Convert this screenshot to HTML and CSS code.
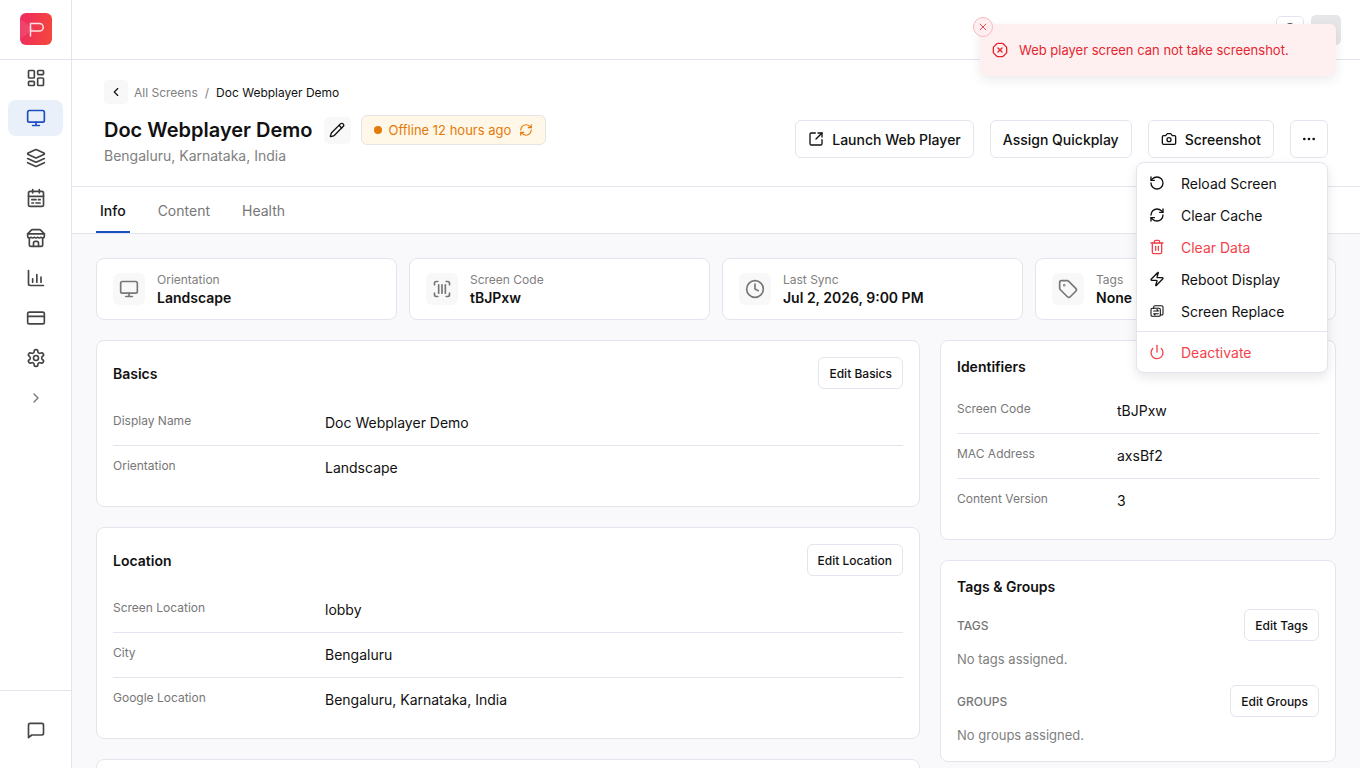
FILE: index.html
```html
<!DOCTYPE html>
<html lang="en">
<head>
  <meta charset="UTF-8">
  <meta name="viewport" content="width=device-width, initial-scale=1.0">
  <title>Doc Webplayer Demo</title>
  <link rel="stylesheet" href="styles.css">
</head>
<body>
  <svg class="sprite" width="0" height="0">
    <symbol id="i-monitor" viewBox="0 0 24 24"><rect x="2" y="3" width="20" height="14" rx="2"/><path d="M8 21h8M12 17v4"/></symbol>
    <symbol id="i-refresh" viewBox="0 0 24 24"><path d="M3 12a9 9 0 0 1 9-9 9.75 9.75 0 0 1 6.74 2.74L21 8"/><path d="M21 3v5h-5"/><path d="M21 12a9 9 0 0 1-9 9 9.75 9.75 0 0 1-6.74-2.74L3 16"/><path d="M8 16H3v5"/></symbol>
  </svg>

  <aside class="sidebar">
    <div class="logo-row">
      <div class="logo">
        <svg viewBox="0 0 32 32" width="32" height="32"><path class="logo-tri" d="M0 6l14 10L0 26z"/><path class="logo-p" d="M10.5 23V10.5h9a3.5 3.5 0 0 1 0 7.5h-9"/></svg>
      </div>
    </div>
    <nav class="side-nav">
      <a class="side-item"><svg class="ico" viewBox="0 0 24 24"><rect x="3" y="3" width="7" height="9" rx="1"/><rect x="14" y="3" width="7" height="5" rx="1"/><rect x="14" y="12" width="7" height="9" rx="1"/><rect x="3" y="16" width="7" height="5" rx="1"/></svg></a>
      <a class="side-item active"><svg class="ico"><use href="#i-monitor"/></svg></a>
      <a class="side-item"><svg class="ico" viewBox="0 0 24 24"><path d="m12.83 2.18a2 2 0 0 0-1.66 0L2.6 6.08a1 1 0 0 0 0 1.83l8.58 3.91a2 2 0 0 0 1.66 0l8.58-3.9a1 1 0 0 0 0-1.83Z"/><path d="m22 17.65-9.17 4.16a2 2 0 0 1-1.66 0L2 17.65"/><path d="m22 12.65-9.17 4.16a2 2 0 0 1-1.66 0L2 12.65"/></svg></a>
      <a class="side-item"><svg class="ico" viewBox="0 0 24 24"><path d="M8 2v4M16 2v4"/><rect x="3" y="4" width="18" height="18" rx="2"/><path d="M3 10h18M7 14h5M15 14h2M7 18h2M12 18h5"/></svg></a>
      <a class="side-item"><svg class="ico" viewBox="0 0 24 24"><path d="m2 7 4.41-4.41A2 2 0 0 1 7.83 2h8.34a2 2 0 0 1 1.42.59L22 7"/><path d="M4 12v8a2 2 0 0 0 2 2h12a2 2 0 0 0 2-2v-8"/><path d="M15 22v-4a2 2 0 0 0-2-2h-2a2 2 0 0 0-2 2v4"/><path d="M2 7h20"/><path d="M22 7v3a2 2 0 0 1-2 2 2.7 2.7 0 0 1-1.59-.63.7.7 0 0 0-.82 0A2.7 2.7 0 0 1 16 12a2.7 2.7 0 0 1-1.59-.63.7.7 0 0 0-.82 0A2.7 2.7 0 0 1 12 12a2.7 2.7 0 0 1-1.59-.63.7.7 0 0 0-.82 0A2.7 2.7 0 0 1 8 12a2.7 2.7 0 0 1-1.59-.63.7.7 0 0 0-.82 0A2.7 2.7 0 0 1 4 12a2 2 0 0 1-2-2V7"/></svg></a>
      <a class="side-item"><svg class="ico" viewBox="0 0 24 24"><path d="M3 3v16a2 2 0 0 0 2 2h16"/><path d="M8 17v-4M13 17V8M18 17v-6"/></svg></a>
      <a class="side-item"><svg class="ico" viewBox="0 0 24 24"><rect x="2" y="5" width="20" height="14" rx="2"/><path d="M2 10h20"/></svg></a>
      <a class="side-item"><svg class="ico" viewBox="0 0 24 24"><path d="M12.22 2h-.44a2 2 0 0 0-2 2v.18a2 2 0 0 1-1 1.73l-.43.25a2 2 0 0 1-2 0l-.15-.08a2 2 0 0 0-2.73.73l-.22.38a2 2 0 0 0 .73 2.73l.15.1a2 2 0 0 1 1 1.72v.51a2 2 0 0 1-1 1.74l-.15.09a2 2 0 0 0-.73 2.73l.22.38a2 2 0 0 0 2.73.73l.15-.08a2 2 0 0 1 2 0l.43.25a2 2 0 0 1 1 1.73V20a2 2 0 0 0 2 2h.44a2 2 0 0 0 2-2v-.18a2 2 0 0 1 1-1.73l.43-.25a2 2 0 0 1 2 0l.15.08a2 2 0 0 0 2.73-.73l.22-.39a2 2 0 0 0-.73-2.73l-.15-.08a2 2 0 0 1-1-1.74v-.5a2 2 0 0 1 1-1.74l.15-.09a2 2 0 0 0 .73-2.73l-.22-.38a2 2 0 0 0-2.73-.73l-.15.08a2 2 0 0 1-2 0l-.43-.25a2 2 0 0 1-1-1.73V4a2 2 0 0 0-2-2z"/><circle cx="12" cy="12" r="3"/></svg></a>
      <a class="side-item side-toggle"><svg class="ico-sm" viewBox="0 0 24 24"><path d="m9 18 6-6-6-6"/></svg></a>
    </nav>
    <div class="side-foot">
      <svg class="ico" viewBox="0 0 24 24"><path d="M21 16a2 2 0 0 1-2 2H7l-4 3V6a2 2 0 0 1 2-2h14a2 2 0 0 1 2 2z"/></svg>
    </div>
  </aside>

  <div class="main">
    <div class="topbar">
      <div class="top-btn"><span class="bell-top"></span></div>
      <div class="avatar"></div>
    </div>

    <header class="page-head">
      <div class="head-left">
        <div class="crumbs">
          <span class="back-btn"><svg class="ico-xs" viewBox="0 0 24 24"><path d="m15 18-6-6 6-6"/></svg></span>
          <span class="crumb-link">All Screens</span>
          <span class="crumb-sep">/</span>
          <span class="crumb-current">Doc Webplayer Demo</span>
        </div>
        <div class="title-row">
          <h1>Doc Webplayer Demo</h1>
          <span class="pencil-btn"><svg class="ico-sm" viewBox="0 0 24 24"><path d="M21.174 6.812a1 1 0 0 0-3.986-3.987L3.842 16.174a2 2 0 0 0-.5.83l-1.321 4.352a.5.5 0 0 0 .623.622l4.353-1.32a2 2 0 0 0 .83-.497z"/><path d="m15 5 4 4"/></svg></span>
          <span class="status-badge"><span class="status-dot"></span>Offline 12 hours ago<svg class="ico-xs status-refresh"><use href="#i-refresh"/></svg></span>
        </div>
        <p class="subtitle">Bengaluru, Karnataka, India</p>
      </div>
      <div class="head-actions">
        <button class="btn"><svg class="ico-sm" viewBox="0 0 24 24"><path d="M21 13v6a2 2 0 0 1-2 2H5a2 2 0 0 1-2-2V5a2 2 0 0 1 2-2h6"/><path d="m21 3-9 9"/><path d="M15 3h6v6"/></svg>Launch Web Player</button>
        <button class="btn">Assign Quickplay</button>
        <button class="btn"><svg class="ico-sm" viewBox="0 0 24 24"><path d="M14.5 4h-5L7 7H4a2 2 0 0 0-2 2v9a2 2 0 0 0 2 2h16a2 2 0 0 0 2-2V9a2 2 0 0 0-2-2h-3l-2.5-3z"/><circle cx="12" cy="13" r="3"/></svg>Screenshot</button>
        <button class="btn btn-more"><svg class="ico-sm" viewBox="0 0 24 24"><circle cx="5" cy="12" r="1"/><circle cx="12" cy="12" r="1"/><circle cx="19" cy="12" r="1"/></svg></button>
      </div>
    </header>

    <div class="tabs">
      <a class="tab active">Info</a>
      <a class="tab">Content</a>
      <a class="tab">Health</a>
    </div>

    <div class="content">
      <div class="stats">
        <div class="stat">
          <span class="stat-icon"><svg class="ico"><use href="#i-monitor"/></svg></span>
          <div><div class="stat-label">Orientation</div><div class="stat-value">Landscape</div></div>
        </div>
        <div class="stat">
          <span class="stat-icon"><svg class="ico" viewBox="0 0 24 24"><path d="M3 7V5a2 2 0 0 1 2-2h2"/><path d="M17 3h2a2 2 0 0 1 2 2v2"/><path d="M21 17v2a2 2 0 0 1-2 2h-2"/><path d="M7 21H5a2 2 0 0 1-2-2v-2"/><path d="M8 7v10M12 7v10M16 7v10"/></svg></span>
          <div><div class="stat-label">Screen Code</div><div class="stat-value">tBJPxw</div></div>
        </div>
        <div class="stat">
          <span class="stat-icon"><svg class="ico" viewBox="0 0 24 24"><circle cx="12" cy="12" r="10"/><path d="M12 6v6l4 2"/></svg></span>
          <div><div class="stat-label">Last Sync</div><div class="stat-value">Jul 2, 2026, 9:00 PM</div></div>
        </div>
        <div class="stat">
          <span class="stat-icon"><svg class="ico" viewBox="0 0 24 24"><path d="M12.586 2.586A2 2 0 0 0 11.172 2H4a2 2 0 0 0-2 2v7.172a2 2 0 0 0 .586 1.414l8.704 8.704a2.426 2.426 0 0 0 3.42 0l6.58-6.58a2.426 2.426 0 0 0 0-3.42z"/><circle cx="7.5" cy="7.5" r=".5"/></svg></span>
          <div><div class="stat-label">Tags</div><div class="stat-value">None</div></div>
        </div>
      </div>

      <div class="columns">
        <div class="col">
          <section class="card">
            <div class="card-head"><h2>Basics</h2><button class="btn-sm">Edit Basics</button></div>
            <div class="row"><span class="row-label">Display Name</span><span class="row-value">Doc Webplayer Demo</span></div>
            <div class="row"><span class="row-label">Orientation</span><span class="row-value">Landscape</span></div>
          </section>
          <section class="card">
            <div class="card-head"><h2>Location</h2><button class="btn-sm">Edit Location</button></div>
            <div class="row"><span class="row-label">Screen Location</span><span class="row-value">lobby</span></div>
            <div class="row"><span class="row-label">City</span><span class="row-value">Bengaluru</span></div>
            <div class="row"><span class="row-label">Google Location</span><span class="row-value">Bengaluru, Karnataka, India</span></div>
          </section>
          <section class="card card-empty"></section>
        </div>

        <div class="col">
          <section class="card side-card">
            <h2 class="card-title">Identifiers</h2>
            <div class="row"><span class="row-label">Screen Code</span><span class="row-value">tBJPxw</span></div>
            <div class="row"><span class="row-label">MAC Address</span><span class="row-value">axsBf2</span></div>
            <div class="row"><span class="row-label">Content Version</span><span class="row-value">3</span></div>
          </section>
          <section class="card side-card">
            <h2 class="card-title">Tags &amp; Groups</h2>
            <div class="group-head"><span class="group-label">TAGS</span><button class="btn-sm">Edit Tags</button></div>
            <p class="group-empty">No tags assigned.</p>
            <div class="group-head"><span class="group-label">GROUPS</span><button class="btn-sm">Edit Groups</button></div>
            <p class="group-empty">No groups assigned.</p>
          </section>
        </div>
      </div>
    </div>
  </div>

  <div class="menu">
    <a class="menu-item"><svg class="ico-sm" viewBox="0 0 24 24"><path d="M3 12a9 9 0 1 0 9-9 9.75 9.75 0 0 0-6.74 2.74L3 8"/><path d="M3 3v5h5"/></svg>Reload Screen</a>
    <a class="menu-item"><svg class="ico-sm"><use href="#i-refresh"/></svg>Clear Cache</a>
    <a class="menu-item danger"><svg class="ico-sm" viewBox="0 0 24 24"><path d="M3 6h18"/><path d="M19 6v14c0 1-1 2-2 2H7c-1 0-2-1-2-2V6"/><path d="M8 6V4c0-1 1-2 2-2h4c1 0 2 1 2 2v2"/><path d="M10 11v6M14 11v6"/></svg>Clear Data</a>
    <a class="menu-item"><svg class="ico-sm" viewBox="0 0 24 24"><path d="M4 14a1 1 0 0 1-.78-1.63l9.9-10.2a.5.5 0 0 1 .86.46l-1.92 6.02A1 1 0 0 0 13 10h7a1 1 0 0 1 .78 1.63l-9.9 10.2a.5.5 0 0 1-.86-.46l1.92-6.02A1 1 0 0 0 11 14z"/></svg>Reboot Display</a>
    <a class="menu-item"><svg class="ico-sm thin" viewBox="0 0 24 24"><path d="M7 8V6a2 2 0 0 1 2-2h10a2 2 0 0 1 2 2v10a2 2 0 0 1-2 2h-2"/><rect x="3" y="8" width="14" height="12" rx="2"/><path d="M7 12h7l-2-2M14 16H7l2 2"/></svg>Screen Replace</a>
    <div class="menu-sep"></div>
    <a class="menu-item danger"><svg class="ico-sm" viewBox="0 0 24 24"><path d="M12 2v10"/><path d="M18.4 6.6a9 9 0 1 1-12.77.04"/></svg>Deactivate</a>
  </div>

  <div class="toast">
    <span class="toast-close"><svg viewBox="0 0 24 24" width="10" height="10"><path d="M19 5 5 19M5 5l14 14"/></svg></span>
    <svg class="ico-sm" viewBox="0 0 24 24"><path d="m15 9-6 6"/><path d="M2.586 16.726A2 2 0 0 1 2 15.312V8.688a2 2 0 0 1 .586-1.414l4.688-4.688A2 2 0 0 1 8.688 2h6.624a2 2 0 0 1 1.414.586l4.688 4.688A2 2 0 0 1 22 8.688v6.624a2 2 0 0 1-.586 1.414l-4.688 4.688a2 2 0 0 1-1.414.586H8.688a2 2 0 0 1-1.414-.586z"/><path d="m9 9 6 6"/></svg>
    <span>Web player screen can not take screenshot.</span>
  </div>
</body>
</html>
```

FILE: styles.css
```css
* {
  box-sizing: border-box;
}
html, body {
  height: 100%;
}
body {
  margin: 0;
  display: flex;
  height: 768px;
  overflow: hidden;
  background-color: #fff;
  color: #111;
  font-family: Inter, sans-serif;
  font-size: 14px;
}
h1, h2, p {
  margin: 0;
}
svg {
  fill: none;
  stroke: currentColor;
  stroke-width: 2;
  stroke-linecap: round;
  stroke-linejoin: round;
  flex-shrink: 0;
}
.sprite {
  position: absolute;
}
.ico {
  width: 20px;
  height: 20px;
}
.ico-sm {
  width: 16px;
  height: 16px;
}
.ico-xs {
  width: 14px;
  height: 14px;
}
.thin {
  stroke-width: 1.6;
}

/* sidebar */
.sidebar {
  width: 72px;
  flex-shrink: 0;
  display: flex;
  flex-direction: column;
  border-right: 1px solid #e4e4ee;
  color: #444;
}
.logo-row {
  height: 60px;
  flex-shrink: 0;
  display: flex;
  align-items: center;
  justify-content: center;
  border-bottom: 1px solid #e4e4ee;
}
.logo {
  width: 32px;
  height: 32px;
  margin-top: -1px;
  border-radius: 6px;
  overflow: hidden;
  background: linear-gradient(100deg, #ee2a62, #f5483a);
}
.logo svg {
  display: block;
}
.logo-tri {
  fill: rgba(255, 255, 255, 0.1);
  stroke: none;
}
.logo-p {
  stroke: #fff;
  stroke-width: 1.5;
  opacity: 0.85;
}
.side-nav {
  flex: 1;
  display: flex;
  flex-direction: column;
  gap: 4px;
  padding: 0 8px;
}
.side-item {
  width: 55px;
  height: 36px;
  display: flex;
  align-items: center;
  justify-content: center;
  border-radius: 8px;
}
.side-item.active {
  background-color: #eaf0fa;
  color: #1d4fc4;
}
.side-toggle {
  color: #777;
}
.side-foot {
  height: 78px;
  flex-shrink: 0;
  display: flex;
  align-items: center;
  justify-content: center;
  border-top: 1px solid #e4e4ee;
}

/* main column */
.main {
  flex: 1;
  min-width: 0;
  display: flex;
  flex-direction: column;
}
.topbar {
  height: 60px;
  flex-shrink: 0;
  display: flex;
  justify-content: flex-end;
  gap: 7px;
  padding: 15px 19px 0 0;
  border-bottom: 1px solid #e4e4ee;
}
.top-btn {
  width: 28px;
  height: 28px;
  margin-top: 1px;
  display: flex;
  justify-content: center;
  padding-top: 6px;
  border: 1px solid #e4e4ee;
  border-radius: 5px;
}
.bell-top {
  width: 8px;
  height: 8px;
  border: 2px solid #555;
  border-radius: 50%;
}
.avatar {
  width: 30px;
  height: 30px;
  border-radius: 5px;
  background-color: #e6e6e8;
}

.page-head {
  height: 127px;
  flex-shrink: 0;
  display: flex;
  justify-content: space-between;
  padding: 20px 32px 0;
  border-bottom: 1px solid #e4e4ee;
}
.crumbs {
  display: flex;
  align-items: center;
  height: 24px;
  font-size: 12px;
}
.back-btn {
  width: 24px;
  height: 24px;
  margin-right: 6px;
  display: flex;
  align-items: center;
  justify-content: center;
  border-radius: 4px;
  background-color: #f8f8f8;
}
.crumb-link {
  color: #808080;
}
.crumb-sep {
  margin: 0 7px;
  color: #808080;
}
.title-row {
  display: flex;
  align-items: center;
  height: 30px;
  margin-top: 11px;
}
h1 {
  font-size: 20px;
  font-weight: 600;
  line-height: 30px;
}
.pencil-btn {
  width: 27px;
  height: 27px;
  margin-left: 11px;
  display: flex;
  align-items: center;
  justify-content: center;
  border-radius: 5px;
  background-color: #f8f8f8;
}
.status-badge {
  height: 30px;
  margin-left: 10px;
  display: flex;
  align-items: center;
  padding: 0 12px;
  border: 1px solid #e6e4e4;
  border-radius: 6px;
  background-color: #fff8e8;
  color: #e47a09;
  font-size: 13px;
}
.status-dot {
  width: 8px;
  height: 8px;
  margin-right: 7px;
  border-radius: 50%;
  background-color: #e47a09;
}
.status-refresh {
  margin-left: 8px;
}
.subtitle {
  margin-top: 1px;
  line-height: 20px;
  color: #808080;
}
.head-actions {
  display: flex;
  gap: 16px;
  padding-top: 40px;
}
.btn {
  height: 38px;
  display: flex;
  align-items: center;
  gap: 8px;
  padding: 0 12px;
  border: 1px solid #e4e4ee;
  border-radius: 6px;
  background-color: #fff;
  color: #111;
  font-family: inherit;
  font-size: 14px;
  font-weight: 500;
}
.btn-more {
  width: 38px;
  justify-content: center;
  padding: 0;
}
.btn-more circle {
  fill: currentColor;
}

.tabs {
  height: 47px;
  flex-shrink: 0;
  display: flex;
  gap: 24px;
  padding-left: 24px;
  border-bottom: 1px solid #e4e4ee;
}
.tab {
  height: 46px;
  display: flex;
  align-items: center;
  padding: 0 4px;
  color: #777;
}
.tab.active {
  color: #111;
  font-weight: 500;
  border-bottom: 2px solid #1d4fc4;
  padding-top: 2px;
}

/* content */
.content {
  flex: 1;
  min-height: 0;
  padding: 24px;
  background-color: #f9f9fb;
}
.stats {
  display: grid;
  grid-template-columns: repeat(4, 1fr);
  gap: 12px;
}
.stat {
  height: 62px;
  display: flex;
  align-items: center;
  gap: 12px;
  padding: 0 16px;
  border: 1px solid #e4e4ee;
  border-radius: 8px;
  background-color: #fff;
}
.stat-icon {
  width: 32px;
  height: 32px;
  display: flex;
  align-items: center;
  justify-content: center;
  border-radius: 6px;
  background-color: #f8f8f8;
  color: #777;
}
.stat-label {
  font-size: 12px;
  line-height: 18px;
  color: #808080;
}
.stat-value {
  font-weight: 600;
  line-height: 18px;
}
.columns {
  display: grid;
  grid-template-columns: minmax(0, 1fr) 396px;
  gap: 20px;
  margin-top: 20px;
}
.col {
  display: flex;
  flex-direction: column;
  gap: 20px;
}
.card {
  padding: 16px;
  border: 1px solid #e4e4ee;
  border-radius: 8px;
  background-color: #fff;
}
.card-empty {
  height: 120px;
}
.card-head {
  display: flex;
  align-items: center;
  justify-content: space-between;
  height: 32px;
  margin-bottom: 12px;
}
h2 {
  font-size: 14px;
  font-weight: 600;
}
.card-title {
  line-height: 20px;
  margin-bottom: 12px;
}
.btn-sm {
  height: 32px;
  padding: 0 10px;
  border: 1px solid #e4e4ee;
  border-radius: 6px;
  background-color: #fff;
  color: #111;
  font-family: inherit;
  font-size: 12px;
  font-weight: 500;
}
.row {
  display: grid;
  grid-template-columns: 212px 1fr;
  padding: 12px 0;
  border-bottom: 1px solid #e4e4ee;
}
.row:last-child {
  padding-bottom: 12px;
  border-bottom: none;
}
.side-card .row {
  grid-template-columns: 160px 1fr;
}
.row-label {
  font-size: 12px;
  line-height: 16px;
  color: #777;
}
.row-value {
  line-height: 20px;
}
.group-head {
  display: flex;
  align-items: center;
  justify-content: space-between;
}
.group-label {
  font-size: 12px;
  font-weight: 500;
  color: #777;
}
.group-empty {
  margin: 8px 0 16px;
  font-size: 13px;
  line-height: 20px;
  color: #808080;
}
.group-empty:last-child {
  margin-bottom: 0;
}

/* floating menu + toast */
.menu {
  position: absolute;
  left: 1136px;
  top: 162px;
  width: 192px;
  padding: 4px;
  border: 1px solid #e4e4ee;
  border-radius: 8px;
  background-color: #fff;
  box-shadow: 0 4px 12px rgba(0, 0, 0, 0.1);
}
.menu-item {
  height: 32px;
  display: flex;
  align-items: center;
  gap: 16px;
  padding: 0 8px;
}
.menu-item.danger {
  color: #f2434b;
}
.menu-sep {
  height: 1px;
  margin: 4px -4px;
  background-color: #e4e4ee;
}
.toast {
  position: absolute;
  left: 980px;
  top: 24px;
  width: 356px;
  height: 52px;
  display: flex;
  align-items: center;
  gap: 11px;
  padding-left: 12px;
  border-radius: 6px;
  background-color: #fef0f1;
  color: #e6262e;
  font-size: 13px;
  box-shadow: 0 4px 12px rgba(0, 0, 0, 0.08);
}
.toast-close {
  position: absolute;
  left: -7px;
  top: -7px;
  width: 20px;
  height: 20px;
  display: flex;
  align-items: center;
  justify-content: center;
  border: 1px solid #f6b9bc;
  border-radius: 50%;
  background-color: #fef0f1;
}
```
